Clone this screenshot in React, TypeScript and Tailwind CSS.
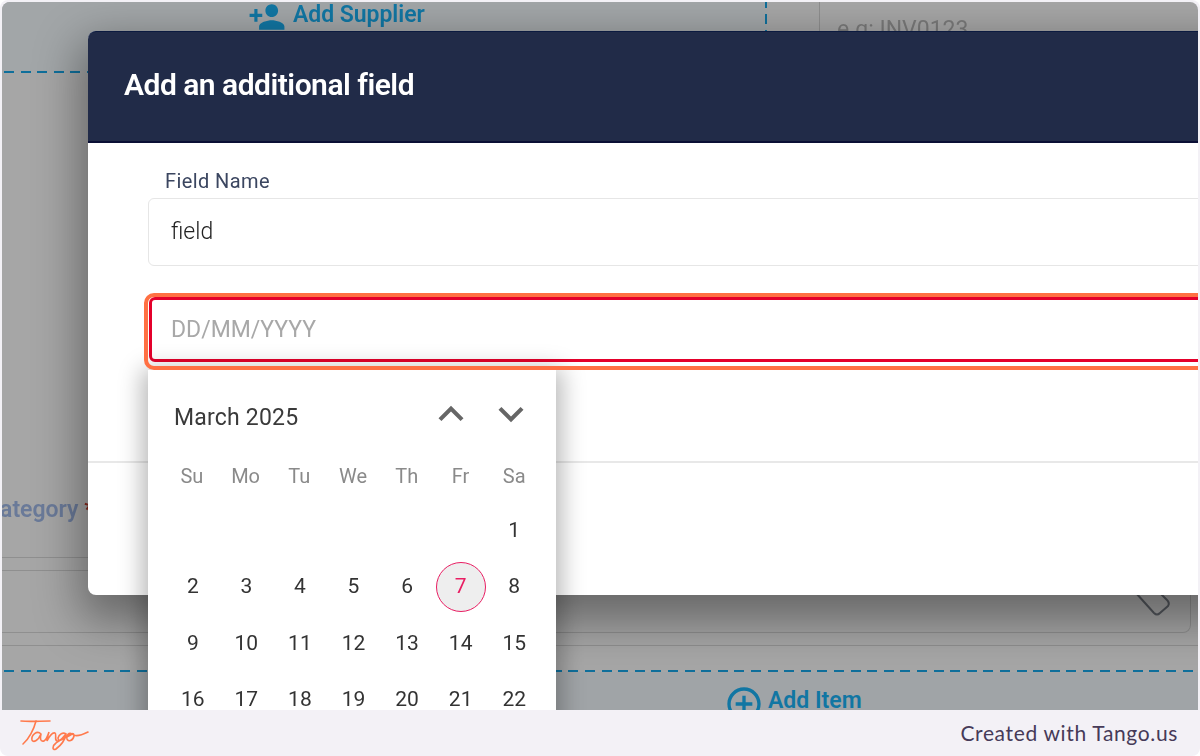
import { MdPersonAdd, MdKeyboardArrowUp, MdKeyboardArrowDown, MdAddCircleOutline } from "react-icons/md";

const font = { fontFamily: "Roboto, sans-serif" };
const days = ["Su", "Mo", "Tu", "We", "Th", "Fr", "Sa"];
const weeks: (number | null)[][] = [
  [null, null, null, null, null, null, 1],
  [2, 3, 4, 5, 6, 7, 8],
  [9, 10, 11, 12, 13, 14, 15],
  [16, 17, 18, 19, 20, 21, 22],
];

function DashRow() {
  return <div className="h-[2px] w-full shrink-0 bg-[repeating-linear-gradient(90deg,transparent_0_2px,#0f6f9b_2px_12px,transparent_12px_16.6px)]" />;
}

function PageBehind() {
  return (
    <div className="flex h-full flex-col bg-[#a6a6a6] text-[23px]">
      <div className="flex h-[69px] shrink-0">
        <div className="flex w-[765px] bg-[#a2a6a8] pl-[246px]">
          <MdPersonAdd size={38} className="mt-[-4px] shrink-0 text-[#1176a3]" />
          <span className="ml-[7px] h-[26px] font-semibold leading-[26px] tracking-[-0.05px] text-[#1176a3]">Add Supplier</span>
          <div className="ml-auto h-full w-[2px] shrink-0 bg-[repeating-linear-gradient(180deg,#0f6f9b_0_6px,transparent_6px_12px,#0f6f9b_12px_22px,transparent_22px_28px)]" />
        </div>
        <div className="flex-1 pl-[52px]">
          <div className="h-full border-l border-[#8e8e8e] pl-[17px] pt-[15px] leading-[26px] text-[#7a7a7a]">e.g: INV0123</div>
        </div>
      </div>
      <DashRow />
      <div className="ml-[-17px] mt-[422px] h-[30px] shrink-0 font-semibold leading-[30px] text-[#6a7a99]">
        Category <span className="text-[#8b2a1e]">*</span>
      </div>
      <div className="mt-[32px] h-[13px] shrink-0 border-t border-[#8f8f8f]" />
      <div className="mr-[7px] flex h-[63px] shrink-0 justify-end rounded-br-lg border-b border-r border-t border-[#8f8f8f] pr-[18px] pt-[18px]">
        <svg width="40" height="34" viewBox="0 0 40 34" fill="none" className="shrink-0">
          <path d="M4 4 L22 24 Q25 27 28 24 L36 17 Q38 14 35 11 L28 4" stroke="#55595f" strokeWidth="2" />
        </svg>
      </div>
      <div className="mt-[12px] h-[1px] shrink-0 bg-[#8f8f8f]" />
      <div className="mt-[24px]">
        <DashRow />
      </div>
      <div className="flex flex-1 bg-[#a0a4a7] pl-[722px] pt-[12px]">
        <MdAddCircleOutline size={40} className="shrink-0 text-[#1176a3]" />
        <span className="ml-[4px] mt-[4px] h-[26px] font-semibold leading-[26px] text-[#1176a3]">Add Item</span>
      </div>
    </div>
  );
}

function Dialog() {
  return (
    <div className="absolute left-[86px] top-[29px] h-[564px] w-[1200px] rounded-lg bg-white shadow-[0_18px_46px_8px_rgba(0,0,0,0.38)]">
      <div className="flex h-[112px] items-center rounded-t-lg border-b-2 border-t border-b-[#0a0f35] border-t-[#0b1a40] bg-[#212b48] pb-[4px] pl-[36px] text-[30px] font-semibold tracking-[-0.5px] text-white">
        Add an additional field
      </div>
      <div className="h-[318px] pt-[28px]">
        <div className="ml-[77px] h-[20px] text-[20px] leading-[20px] tracking-[0.4px] text-[#3b4660]">Field Name</div>
        <div className="ml-[60px] mt-[7px] flex h-[68px] items-center rounded-md border-[1.5px] border-[#e6e6e6] pl-[22px] text-[23px] font-light text-[#222222]">
          field
        </div>
        <div className="relative ml-[61px] mt-[31px] flex h-[65px] items-center rounded-md border-[3px] border-[#e4002b] pl-[19px] pt-[2px] text-[23px] text-[#a8a8a8]">
          DD/MM/YYYY
          <div className="absolute bottom-[-11px] left-[-8px] right-[-8px] top-[-7px] z-10 rounded-[10px] border-4 border-[#ff7043]" />
        </div>
      </div>
      <div className="border-t-2 border-[#e8e8e8]" />
      <CalendarPopover />
    </div>
  );
}

function CalendarPopover() {
  return (
    <div className="absolute left-[60px] top-[339px] h-[420px] w-[408px] bg-white pl-[18px] pr-[15px] shadow-[0_5px_22px_6px_rgba(0,0,0,0.28)]">
      <div className="ml-[-18px] mr-[-15px] flex h-[90px] items-center justify-between pl-[26px] pr-[20px] pt-[4px]">
        <span className="mt-[2px] text-[23px] tracking-[0.2px] text-[#3a3a3a]">March 2025</span>
        <div className="flex gap-[10px] text-[#666666]">
          <MdKeyboardArrowUp size={50} className="mt-[-6px]" />
          <MdKeyboardArrowDown size={50} className="mt-[-6px]" />
        </div>
      </div>
      <div className="ml-[-1px] grid h-[32px] grid-cols-7 items-center text-center text-[20px] text-[#8a8a8a]">
        {days.map((d) => (
          <span key={d}>{d}</span>
        ))}
      </div>
      <div className="mt-[10px] grid grid-cols-7 text-center text-[21px] text-[#333333]">
        {weeks.flat().map((n, i) => (
          <div key={i} className="flex h-[56.5px] items-center justify-center">
            {n === 7 ? (
              <span className="flex h-[50px] w-[50px] items-center justify-center rounded-full border-[1.5px] border-[#e91e63] bg-[#eeeeee] text-[#e91e63]">7</span>
            ) : (
              n
            )}
          </div>
        ))}
      </div>
    </div>
  );
}

export default function App() {
  return (
    <div style={font} className="flex h-[756px] w-[1200px] flex-col overflow-hidden rounded-lg bg-[#f3f1f6] blur-[0.35px]">
      <div className="relative mx-[2px] mt-[2px] h-[708px] shrink-0 overflow-hidden rounded-t-lg">
        <PageBehind />
        <Dialog />
      </div>
      <div className="flex flex-1 items-center justify-between pl-[20px] pr-[22px]">
        <svg width="70" height="34" viewBox="0 0 70 34" fill="none" stroke="#ff7a4d" strokeWidth="1.6" strokeLinecap="round" className="mt-[2px]">
          <path d="M1 4 C10 5 20 4 30 4" />
          <path d="M16 4 C14 12 9 22 3 27" />
          <path d="M21 17 C17 13 11 18 12 23 C13 26 18 24 21 17 C20 21 20 25 24 24 C26 23 28 18 29 15 C28 18 27 22 27 24 C29 20 32 15 35 16 C37 17 34 23 37 24 C40 25 43 20 46 17 C43 15 39 17 38 21 C38 25 43 24 46 17 C45 23 40 29 36 32 C32 34 32 29 36 26 C42 21 48 20 52 17 C49 15 46 18 47 22 C48 25 53 24 54 19 C54 17 53 16 52 17 C55 20 62 18 68 15" />
        </svg>
        <span className="text-[21px] tracking-[0.65px] text-[#463a58]" style={{ fontFamily: "Lato, sans-serif" }}>Created with Tango.us</span>
      </div>
    </div>
  );
}
